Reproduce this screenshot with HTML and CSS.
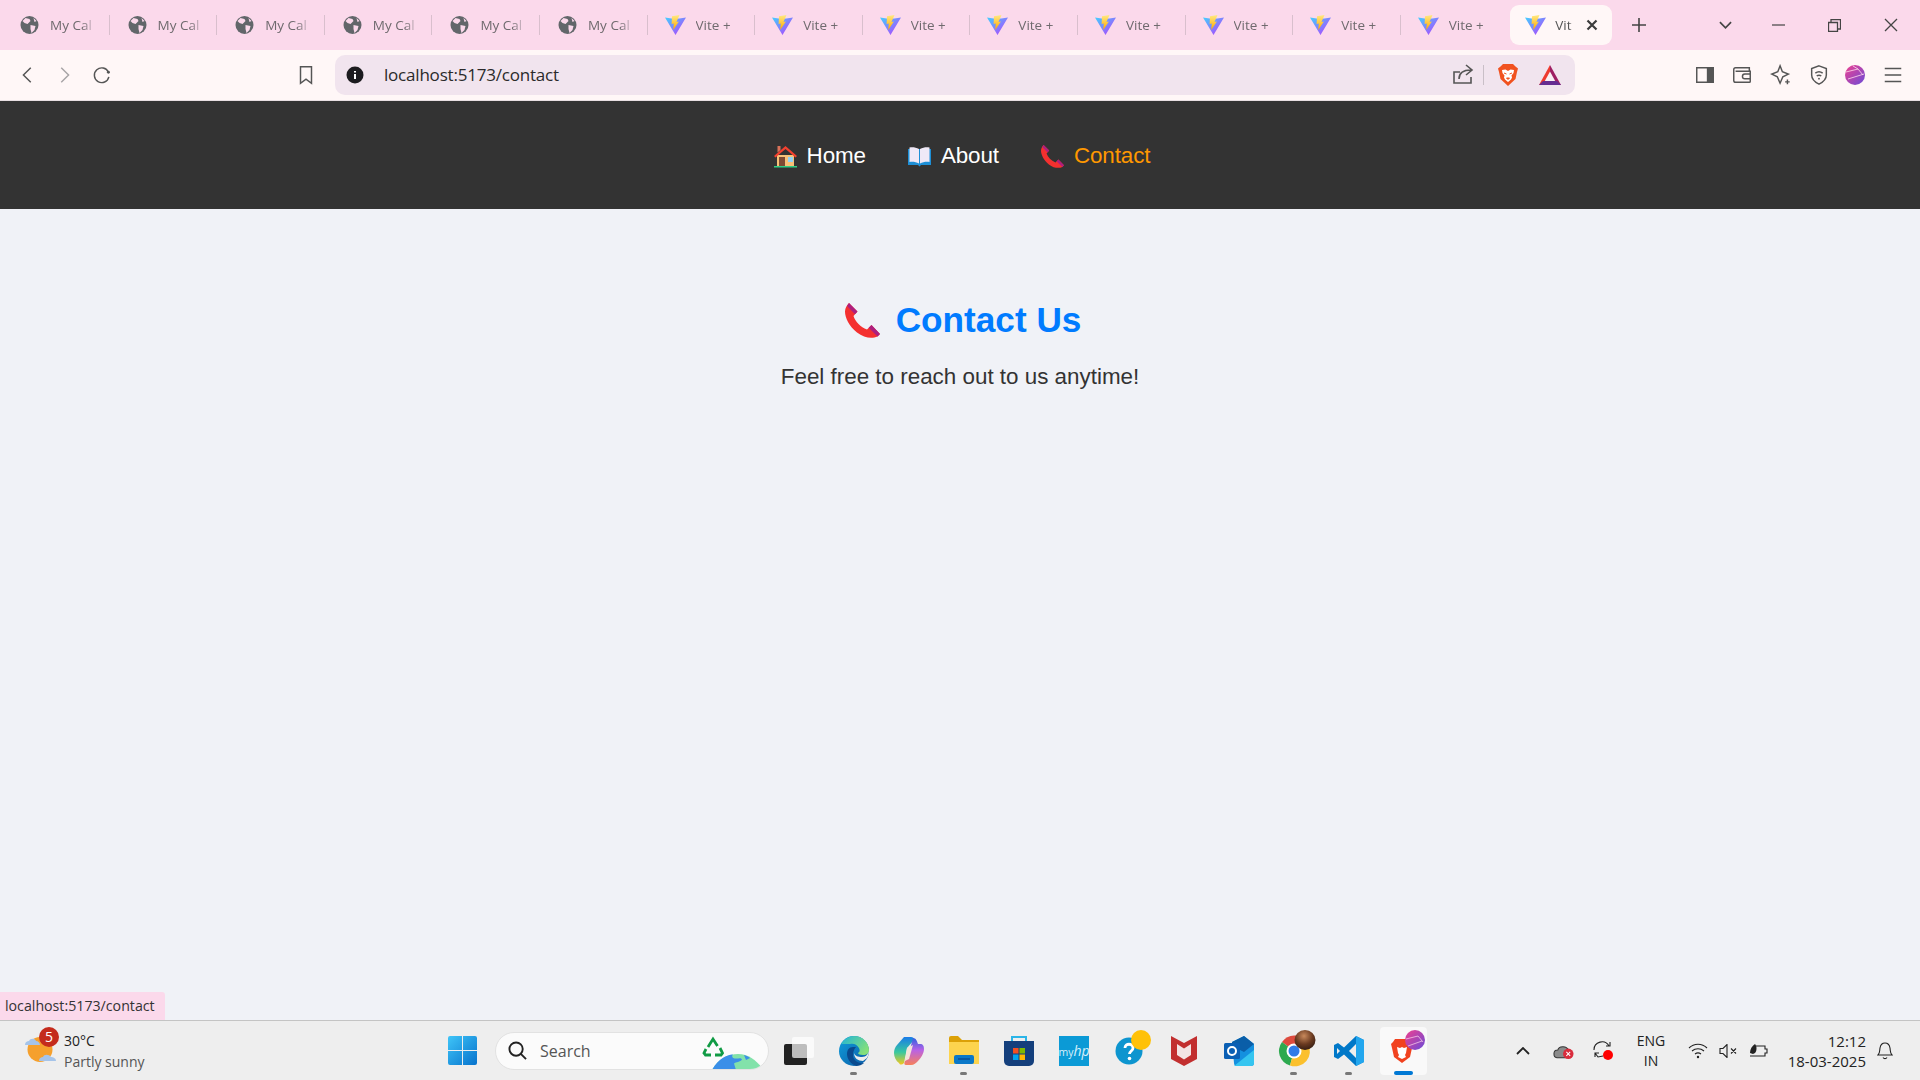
FILE: index.html
```html
<!DOCTYPE html>
<html lang="en">
<head>
<meta charset="utf-8" />
<title>Vite + React</title>
<link rel="stylesheet" href="styles.css">
</head>
<body>
<svg class="defs" width="0" height="0">
	<defs>
		<linearGradient id="viteBody" x1="0" y1="0" x2="1" y2="1">
			<stop offset="0" stop-color="#41d1ff" />
			<stop offset="1" stop-color="#bd34fe" />
		</linearGradient>
		<linearGradient id="viteBolt" x1="0" y1="0" x2="0" y2="1">
			<stop offset="0" stop-color="#ffea83" />
			<stop offset="1" stop-color="#ffa800" />
		</linearGradient>
		<linearGradient id="avatarFill" x1="0" y1="0" x2="1" y2="1">
			<stop offset="0" stop-color="#f0408f" />
			<stop offset="1" stop-color="#6a4bd8" />
		</linearGradient>
		<linearGradient id="edgeBase" x1="0" y1="0" x2="1" y2="1">
			<stop offset="0" stop-color="#0f9fdc" />
			<stop offset="1" stop-color="#0c5aa5" />
		</linearGradient>
		<linearGradient id="edgeTop" x1="0" y1="0" x2="1" y2=".6">
			<stop offset="0" stop-color="#20b4d8" />
			<stop offset="1" stop-color="#84e07a" />
		</linearGradient>
		<linearGradient id="copilotLeft" x1="0" y1="0" x2="0" y2="1">
			<stop offset="0" stop-color="#1a7be8" />
			<stop offset=".55" stop-color="#38c8a0" />
			<stop offset="1" stop-color="#f4c81c" />
		</linearGradient>
		<linearGradient id="copilotRight" x1="0" y1="0" x2="0" y2="1">
			<stop offset="0" stop-color="#2f62e0" />
			<stop offset=".45" stop-color="#b862e6" />
			<stop offset="1" stop-color="#f7805a" />
		</linearGradient>
		<linearGradient id="startFill" x1="0" y1="0" x2="1" y2="1">
			<stop offset="0" stop-color="#3fc5f8" />
			<stop offset="1" stop-color="#0672cc" />
		</linearGradient>
		<radialGradient id="badgeBrown" cx=".45" cy=".3" r=".75">
			<stop offset="0" stop-color="#c98a5c" />
			<stop offset=".55" stop-color="#6a3a20" />
			<stop offset="1" stop-color="#2e1a12" />
		</radialGradient>
		<symbol id="globe" viewBox="0 0 20 20">
			<circle cx="10" cy="10" r="9" fill="#62666a" />
			<path d="M6 3l4 1 1 2-3 3-3-1-2-2zM11 10l5 1-1 4-3 3-1-4zM14 3l3 3-2 1z" fill="#fbd9eb" />
		</symbol>
		<symbol id="vite" viewBox="0 0 21 20">
			<path d="M0 2.5l6.5 1 4 .3 4-.3 6.500-1L10.500 20z" fill="url(#viteBody)" />
			<path d="M14.500 0L7 1.300 6.600 9l2.200-.4-.6 6.400 5.700-8.500-2.400.4z" fill="url(#viteBolt)" />
		</symbol>
		<symbol id="phone" viewBox="0 0 35 35">
			<path d="M4 0l8.500 8.500-4 4.500c2 6 7 11 13.500 13.500l4.500-4.500L35 31l-2.500 2.500C27 36 19 35 12 29.500 4 23 0 15 0 8.500 0 5 2 2 4 0z" fill="#f4302f" />
			<path d="M4 0l8.500 8.500-2.500 2.800L2 3zM26.500 22L35 31l-2.500 2.500-8.800-8.700z" fill="#ad1f7f" />
		</symbol>
	</defs>
</svg>

<div class="tabstrip">
	<div class="tab"><svg class="favicon"><use href="#globe" /></svg><span class="tab-title">My Cal</span></div>
	<div class="tab"><svg class="favicon"><use href="#globe" /></svg><span class="tab-title">My Cal</span></div>
	<div class="tab"><svg class="favicon"><use href="#globe" /></svg><span class="tab-title">My Cal</span></div>
	<div class="tab"><svg class="favicon"><use href="#globe" /></svg><span class="tab-title">My Cal</span></div>
	<div class="tab"><svg class="favicon"><use href="#globe" /></svg><span class="tab-title">My Cal</span></div>
	<div class="tab"><svg class="favicon"><use href="#globe" /></svg><span class="tab-title">My Cal</span></div>
	<div class="tab"><svg class="favicon"><use href="#vite" /></svg><span class="tab-title">Vite +</span></div>
	<div class="tab"><svg class="favicon"><use href="#vite" /></svg><span class="tab-title">Vite +</span></div>
	<div class="tab"><svg class="favicon"><use href="#vite" /></svg><span class="tab-title">Vite +</span></div>
	<div class="tab"><svg class="favicon"><use href="#vite" /></svg><span class="tab-title">Vite +</span></div>
	<div class="tab"><svg class="favicon"><use href="#vite" /></svg><span class="tab-title">Vite +</span></div>
	<div class="tab"><svg class="favicon"><use href="#vite" /></svg><span class="tab-title">Vite +</span></div>
	<div class="tab"><svg class="favicon"><use href="#vite" /></svg><span class="tab-title">Vite +</span></div>
	<div class="tab tab-last"><svg class="favicon"><use href="#vite" /></svg><span class="tab-title">Vite +</span></div>
	<div class="tab-active">
		<svg class="favicon"><use href="#vite" /></svg>
		<span class="tab-title short">Vit</span>
		<svg class="tab-close" viewBox="0 0 12 12"><path d="M1.500 1.500l9 9M10.500 1.500l-9 9" /></svg>
	</div>
	<svg class="strip-icon new-tab" viewBox="0 0 14 14"><path d="M7 0v14M0 7h14" /></svg>
	<svg class="strip-icon tab-list" viewBox="0 0 14 8"><path d="M1 1l6 6 6-6" /></svg>
	<svg class="strip-icon win-min" viewBox="0 0 14 2"><path d="M0 1h14" /></svg>
	<svg class="strip-icon win-max" viewBox="0 0 13 13"><path d="M.5 3.500h9v9h-9zM3 3.500V.500h9.500V10H9.500" /></svg>
	<svg class="strip-icon win-close" viewBox="0 0 14 14"><path d="M1 1l12 12M13 1L1 13" /></svg>
</div>

<div class="toolbar">
	<svg class="tool back" viewBox="0 0 24 24"><path d="M15 4l-8 8 8 8" /></svg>
	<svg class="tool forward" viewBox="0 0 24 24"><path d="M9 4l8 8-8 8" /></svg>
	<svg class="tool reload" viewBox="0 0 24 24"><path d="M19 9a8 8 0 1 0 .500 5" /><circle class="solid" cx="19" cy="9" r="1.600" /></svg>
	<svg class="tool bookmark" viewBox="0 0 24 24"><path d="M6 3h12v18l-6-4.500L6 21z" /></svg>
	<div class="urlbar">
		<svg class="info" viewBox="0 0 18 18"><circle cx="9" cy="9" r="8.500" fill="#1c1b1f" /><path d="M9 8v5M9 5v1.500" stroke="#fff" stroke-width="2" /></svg>
		<span class="url">localhost:5173/contact</span>
		<svg class="tool share" viewBox="0 0 24 24"><path d="M20 14v6H3V9h6M8 16c0-6 4-9 12-9M15 2l6 5-6 5" /></svg>
		<span class="url-divider"></span>
		<svg class="brave" viewBox="0 0 20 22">
			<path d="M5 0h10l2.500 2.500L20 4.500 19 8l-1.500 7L10 22l-7.500-7L1 8 0 4.500l2.500-2z" fill="#f1521f" />
			<path d="M4 6l3.500-.5L10 7l2.500-1.500L16 6l-.5 3-2 2.500.5 2-1 2-3 2.500-3-2.500-1-2 .5-2-2-2.500z" fill="#fff" />
			<path d="M6 9l2.500 1M14 9l-2.500 1M8.500 14h3l-1.500 1.500z" stroke="#f1521f" fill="#f1521f" />
		</svg>
		<svg class="bat" viewBox="0 0 22 20">
			<path d="M11 0L0 20h6l5-10z" fill="#ee3a2f" />
			<path d="M11 0l11 20h-6l-5-10z" fill="#9e1f63" />
			<path d="M0 20l4-4h14l4 4z" fill="#662d91" />
			<path d="M11 6.500l5.200 9.500H5.800z" fill="#f8f0f4" />
		</svg>
	</div>
	<svg class="tool sidepanel" viewBox="0 0 24 24"><path d="M3 4h18v16H3z" /><path class="solid" d="M14 4h7v16h-7z" /></svg>
	<svg class="tool wallet" viewBox="0 0 24 24"><path d="M20 7V4H5a2 2 0 0 0-2 2v12a2 2 0 0 0 2 2h15a1 1 0 0 0 1-1V8H5M21 11h-6a2 2 0 0 0 0 5h6" /></svg>
	<svg class="tool leo" viewBox="0 0 24 24"><path d="M11 2l2.500 6.500L20 11l-6 3-3 7-3-7-6-3 6.500-2.500zM19 17v5M16.500 19.500h5" /></svg>
	<svg class="tool vpn" viewBox="0 0 24 24"><path d="M12 2l8 3v7c0 5-4 8-8 10-4-2-8-5-8-10V5z" /><path d="M8 10c2.500-2 5.500-2 8 0M9.500 13c1.500-1 3.500-1 5 0" /><circle class="solid" cx="12" cy="16" r="1" /></svg>
	<svg class="avatar" viewBox="0 0 20 20">
		<circle cx="10" cy="10" r="10" fill="url(#avatarFill)" />
		<path d="M1 7l12-3 5 6M3 14l16-5M8 1l5 3" stroke="#ffd9ec" stroke-width=".8" fill="none" />
	</svg>
	<svg class="tool menu" viewBox="0 0 24 24"><path d="M3 5h18M3 12h18M3 19h18" /></svg>
</div>

<nav class="site-nav">
	<a class="nav-link" href="#">
		<svg class="nav-icon" viewBox="0 0 23 23">
			<path d="M3 10h17v11H3z" fill="#f7c178" />
			<path d="M0 11L11.500 1 23 11l-1.500 1.500-10-8.500-10 8.500z" fill="#f4402f" />
			<path d="M3.500 1h3v4l-3 2.500z" fill="#d9735a" />
			<path d="M5 12h6v9H5z" fill="#7d4a33" />
			<path d="M14 12h5v5h-5z" fill="#8fd2f5" />
			<path d="M0 21h23v1.500H0z" fill="#2fcf85" />
		</svg>
		Home
	</a>
	<a class="nav-link" href="#">
		<svg class="nav-icon" viewBox="0 0 23 23">
			<path d="M0 4h23v16H13l-1.500 1.500L10 20H0z" fill="#1d8fd6" />
			<path d="M1.500 2.500C5 2 8 2.500 11 4v14.500c-3-1.500-6-2-9.500-1.500zM21.500 2.500C18 2 15 2.500 12 4v14.500c3-1.500 6-2 9.500-1.500z" fill="#efe9f7" />
		</svg>
		About
	</a>
	<a class="nav-link current" href="#">
		<svg class="nav-icon"><use href="#phone" /></svg>
		Contact
	</a>
</nav>

<main class="content">
	<h1 class="title"><svg class="title-icon"><use href="#phone" /></svg>Contact Us</h1>
	<p class="lead">Feel free to reach out to us anytime!</p>
	<div class="status-bubble">localhost:5173/contact</div>
</main>

<footer class="taskbar">
	<div class="weather">
		<svg class="weather-icon" viewBox="0 0 32 32">
			<circle cx="15" cy="14.500" r="12.500" fill="#f5a02d" />
			<path d="M0 10c0-3 2-4 4-4 1-3 6-3 7 0 2 0 4 2 4 4zM14 26c0-3 2-4 4-4 1-3 6-3 8 0 2 0 5 1 5 4z" fill="#a5c4ea" />
		</svg>
		<span class="weather-badge">5</span>
		<div class="weather-text">
			<span class="temp">30°C</span>
			<span class="sky">Partly sunny</span>
		</div>
	</div>

	<svg class="start" viewBox="0 0 29 29">
		<path d="M0 2a2 2 0 0 1 2-2h12v14H0zM15 0h12a2 2 0 0 1 2 2v12H15zM0 15h14v14H2a2 2 0 0 1-2-2zM15 15h14v12a2 2 0 0 1-2 2H15z" fill="url(#startFill)" />
	</svg>

	<div class="search">
		<svg class="search-icon" viewBox="0 0 20 20"><circle cx="8.500" cy="8.500" r="7" /><path d="M13.500 13.500L19 19" /></svg>
		<span class="search-text">Search</span>
		<svg class="search-art" viewBox="0 0 60 38">
			<path d="M6 15l5-8 4.500 7M18 16l2.500 5-1.500 2h-6M9 23H3.500L2 21l2-4" fill="none" stroke="#119b45" stroke-width="2.800" />
			<path d="M10 38c6-11 16-16 26-16s18 6 24 14v2z" fill="#82e2aa" />
			<path d="M10 38c6-11 16-16 21-15.500-2 2 0 4 3 4s5-1 6 1c-2 3-6 2-8 4l2 6.500zM42 23c3 1 5 2 6 3l-4 2z" fill="#3b8fe8" />
		</svg>
	</div>

	<div class="task-icons">
		<div class="task-item">
			<svg class="task-icon" viewBox="0 0 30 30">
				<rect x="0" y="8" width="23" height="21" rx="2" fill="#222" />
				<rect x="8" y="1" width="22" height="21" rx="2" fill="#fff" opacity=".7" />
			</svg>
		</div>
		<div class="task-item open">
			<svg class="task-icon" viewBox="0 0 30 30">
				<circle cx="15" cy="15" r="15" fill="url(#edgeBase)" />
				<path d="M2 8C5 3 10 0 15 0c9 0 15 7 15 14 0 3-2 5-6 5-3 0-5-1-5-2 2-1 2-3 1-5-2-4-6-5-9-4C8 8 5 8 2 8z" fill="url(#edgeTop)" />
				<path d="M14 11c-4 0-6 3-6 7 0 5 4 10 9 12 3 0 6-1 8-3-6 1-11-3-11-8 0-3 1-6 3-8z" fill="#0a4a8e" />
				<path d="M30 15c-1 3-3 6-7 6-4 0-7-1-8-4 0 5 4 8 9 8l4-3c1-2 2-4 2-7z" fill="#eee" />
			</svg>
		</div>
		<div class="task-item">
			<svg class="task-icon" viewBox="0 0 30 30">
				<path d="M10 1h7c2 0 3 1 3 3l-7 8-3 15c-2 2-4 2-5 0C2 25 0 21 0 17c0-3 1-6 3-8z" fill="url(#copilotLeft)" />
				<path d="M19 2c3 0 4 3 5 6h2c3 0 4 2 4 5 0 4-3 9-6 12-2 2-4 4-7 4h-5c-2 0-2-2-1-4l5-12z" fill="url(#copilotRight)" />
				<path d="M13 12l6-3-4 14-4 2z" fill="#f5e4d8" />
			</svg>
		</div>
		<div class="task-item open">
			<svg class="task-icon" viewBox="0 0 30 30">
				<path d="M0 2a2 2 0 0 1 2-2h7l4 4h17v10H0z" fill="#dca107" />
				<path d="M0 6h30v22H0z" fill="#fdd44e" />
				<rect x="5" y="19" width="20" height="9" rx="2" fill="#0b78c8" />
				<path d="M9 23h12" stroke="#0a4f96" stroke-width="1.500" />
			</svg>
		</div>
		<div class="task-item">
			<svg class="task-icon" viewBox="0 0 30 30">
				<path d="M8 6V1h14v5" fill="none" stroke="#2bb5e8" stroke-width="2" />
				<path d="M0 5h30v20a5 5 0 0 1-5 5H5a5 5 0 0 1-5-5z" fill="#143f7c" />
				<path d="M9 12h5.500v5.500H9z" fill="#f25022" />
				<path d="M15.500 12H21v5.500h-5.500z" fill="#7fba00" />
				<path d="M9 18.500h5.500V24H9z" fill="#00a4ef" />
				<path d="M15.500 18.500H21V24h-5.500z" fill="#ffb900" />
			</svg>
		</div>
		<div class="task-item">
			<div class="myhp">my<b>hp</b></div>
		</div>
		<div class="task-item">
			<svg class="task-icon overflow" viewBox="0 0 30 30">
				<circle cx="15" cy="15" r="13.500" fill="#0d95cf" />
				<path d="M11 12c0-5 8-5 8 0 0 3-3.500 3-3.500 6" fill="none" stroke="#fff" stroke-width="2.800" />
				<circle cx="15.500" cy="22.500" r="1.800" fill="#fff" />
				<circle cx="27" cy="4" r="10" fill="#ffc107" />
			</svg>
		</div>
		<div class="task-item">
			<svg class="task-icon" viewBox="0 0 30 30">
				<path d="M2 0l13 7 13-7v23l-13 7-13-7z" fill="#c22f2f" />
				<path d="M8 8l7 4.500L22 8v11l-7 4.500L8 19z" fill="#f3e4e4" />
			</svg>
		</div>
		<div class="task-item">
			<svg class="task-icon" viewBox="0 0 30 30">
				<path d="M8 6l12-6 10 8v19a3 3 0 0 1-3 3H13a3 3 0 0 1-3-3z" fill="#1490df" />
				<path d="M20 0l10 8-10 8-12-6V6z" fill="#0a5ea8" />
				<path d="M10 30l20-16v13a3 3 0 0 1-3 3z" fill="#35c5f0" />
				<rect x="0" y="7" width="16" height="16" rx="1.500" fill="#0a5fb4" />
				<circle cx="8" cy="15" r="4" fill="none" stroke="#fff" stroke-width="2" />
			</svg>
		</div>
		<div class="task-item open">
			<svg class="task-icon overflow" viewBox="0 0 30 30">
				<path d="M15 15L3 6A15 15 0 0 1 29 8z" fill="#dd4b3e" />
				<path d="M15 15L3 6a15 15 0 0 0 8 23.500z" fill="#2da94f" />
				<path d="M15 15l14-7a15 15 0 0 1-18 21.500z" fill="#fbc02d" />
				<circle cx="15" cy="15" r="7.500" fill="#fff" />
				<circle cx="15" cy="15" r="5.500" fill="#2f7be8" />
				<ellipse cx="26" cy="4" rx="10.500" ry="10" fill="url(#badgeBrown)" />
			</svg>
		</div>
		<div class="task-item open">
			<svg class="task-icon" viewBox="0 0 30 30">
				<path d="M22 0l8 4v22l-8 4-12-11.500L4 23l-4-2v-12l4-2 6 4.500z" fill="#0078c8" />
				<path d="M22 0l8 4v22l-8 4z" fill="#22a6ee" />
				<path d="M22 8l-7 7 7 7z" fill="#eeeeee" />
				<path d="M3 12l3 3-3 3z" fill="#eeeeee" />
			</svg>
		</div>
		<div class="task-item active">
			<svg class="task-icon overflow" viewBox="0 0 30 30">
				<path d="M6 3h14l2 3 2 2-1 4-2 9-8 6-8-6-2-9-1-4 2-2z" fill="#f1421f" />
				<path d="M8 11l3 1 2-1 2 1 3-1-1 6-1 2 1 2-4 2-4-2 1-2-1-2z" fill="#fff" />
				<circle cx="26" cy="4" r="10" fill="url(#avatarFill)" />
				<path d="M17 3l12-3 5 6M19 10l14-5" stroke="#ffd9ec" stroke-width=".7" fill="none" />
			</svg>
		</div>
	</div>

	<div class="tray">
		<svg class="tray-icon chevron" viewBox="0 0 14 8"><path d="M1 7l6-6 6 6" /></svg>
		<svg class="tray-icon onedrive" viewBox="0 0 22 18">
			<path d="M1 12c0-3 2-4 4-4 1-4 9-5 11 0v5a3 3 0 0 1-3 3H4c-2 0-3-2-3-4z" fill="#8b8b8b" stroke="#333" />
			<circle cx="16" cy="12" r="5.500" fill="#d92c3c" />
			<path d="M14 10l4 4M18 10l-4 4" stroke="#fff" />
		</svg>
		<svg class="tray-icon sync" viewBox="0 0 22 20">
			<path d="M1 9a8 8 0 0 1 15-4M17 1v4h-4M2 12l3 4 5-1M2 16v-4h4" />
			<circle class="dot" cx="15" cy="14" r="5" />
		</svg>
		<div class="lang"><span>ENG</span><span>IN</span></div>
		<svg class="tray-icon wifi" viewBox="0 0 20 16">
			<path d="M1 5c5-5 13-5 18 0M4 8c3.500-3 8.500-3 12 0M7 11c2-1.500 4-1.500 6 0" />
			<circle class="solid" cx="10" cy="14" r="1.200" />
		</svg>
		<svg class="tray-icon speaker" viewBox="0 0 19 14"><path d="M1 4.500h3l4-4v13l-4-4H1zM12 4.500l5 5M17 4.500l-5 5" /></svg>
		<svg class="tray-icon battery" viewBox="0 0 20 14">
			<path d="M7 2h9v3h2v4h-2v3H1" />
			<path class="solid" d="M1 9c0-4 2-7 5-9 2 2 2 7 0 9l-2 1z" />
		</svg>
		<div class="clock"><span>12:12</span><span>18-03-2025</span></div>
		<svg class="tray-icon bell" viewBox="0 0 16 18"><path d="M1 13c2-2 1.500-4 2-7 .5-3 2.500-5 5-5s4.500 2 5 5c.5 3 0 5 2 7zM6 15.500c1 1.500 3 1.500 4 0" /></svg>
	</div>
</footer>
</body>
</html>
```

FILE: styles.css
```css
html, body {
	margin: 0;
	height: 100%;
}
body {
	display: flex;
	flex-direction: column;
	height: 1080px;
	overflow: hidden;
	background: #f0f2f7;
	font-family: "Liberation Sans", Arial, sans-serif;
}
.defs {
	position: absolute;
}

/* browser tabs */
.tabstrip {
	display: flex;
	align-items: center;
	height: 50px;
	padding-left: 2px;
	background: #fbd9eb;
	font-family: "Open Sans", sans-serif;
	font-size: 13.5px;
}
.tab {
	display: flex;
	align-items: center;
	box-sizing: border-box;
	width: 107.6px;
	height: 20px;
	padding-left: 17px;
	gap: 10px;
	border-right: 1px solid #d9bfcd;
	color: #6f6a6e;
	flex: none;
}
.tab-last {
	border-right: 0;
}
.favicon {
	width: 21px;
	height: 20px;
	flex: none;
}
.tab-title {
	width: 46px;
	white-space: nowrap;
	-webkit-mask-image: linear-gradient(to right, #000 70%, transparent);
	mask-image: linear-gradient(to right, #000 70%, transparent);
}
.tab-title.short {
	width: 20px;
	margin-left: 9px;
	color: #555;
}
.tab-active {
	display: flex;
	align-items: center;
	box-sizing: border-box;
	width: 102px;
	height: 40px;
	margin-left: 2px;
	padding-left: 15px;
	background: #fff7f7;
	border-radius: 9px;
	flex: none;
}
.tab-close {
	width: 12px;
	height: 12px;
	margin-left: 11px;
	fill: none;
	stroke: #3c3c3c;
	stroke-width: 2.2;
}
.strip-icon {
	fill: none;
	stroke: #444;
	stroke-width: 1.300;
	flex: none;
}
.new-tab {
	width: 14px;
	height: 14px;
	margin-left: 20px;
	stroke-width: 1.600;
}
.tab-list {
	width: 13px;
	height: 8px;
	margin-left: 73px;
	stroke-width: 1.800;
}
.win-min {
	width: 13px;
	height: 2px;
	margin-left: 40px;
}
.win-max {
	width: 13px;
	height: 13px;
	margin-left: 43px;
}
.win-close {
	width: 14px;
	height: 14px;
	margin-left: 43px;
}

/* address bar row */
.toolbar {
	display: flex;
	align-items: center;
	box-sizing: border-box;
	height: 51px;
	padding: 0 15px 1px 17px;
	background: #fff7f7;
	border-bottom: 1px solid #e8dfe2;
}
.tool {
	width: 22px;
	height: 22px;
	fill: none;
	stroke: #555;
	stroke-width: 1.600;
	flex: none;
}
.tool .solid {
	fill: #555;
	stroke: none;
}
.forward {
	margin-left: 14px;
	stroke: #a8a4a6;
}
.reload {
	margin-left: 16px;
}
.bookmark {
	margin-left: 182px;
}
.urlbar {
	display: flex;
	align-items: center;
	box-sizing: border-box;
	width: 1240px;
	height: 40px;
	margin-left: 18px;
	padding: 0 14px 0 11px;
	background: #f1e4ee;
	border-radius: 10px;
	flex: none;
}
.info {
	width: 18px;
	height: 18px;
	flex: none;
}
.url {
	margin-left: 20px;
	font-family: "Open Sans", sans-serif;
	font-size: 17px;
	color: #2a2a2a;
	letter-spacing: -.2px;
	flex: 1;
}
.share {
	width: 24px;
	height: 24px;
}
.url-divider {
	width: 1px;
	height: 20px;
	margin: 0 14px 0 8px;
	background: #c9bfc7;
}
.brave {
	width: 20px;
	height: 22px;
	flex: none;
}
.bat {
	width: 22px;
	height: 20px;
	margin-left: 21px;
	flex: none;
}
.sidepanel {
	margin-left: 119px;
}
.wallet {
	margin-left: 15px;
}
.leo {
	margin-left: 17px;
}
.vpn {
	margin-left: 16px;
}
.avatar {
	width: 20px;
	height: 20px;
	margin-left: 15px;
	flex: none;
}
.menu {
	margin-left: 17px;
}

/* site nav */
.site-nav {
	display: flex;
	justify-content: center;
	align-items: center;
	gap: 42px;
	box-sizing: border-box;
	height: 108px;
	padding: 2px 0 0 4px;
	background: #333;
	flex: none;
}
.nav-link {
	display: flex;
	align-items: center;
	gap: 10px;
	font-size: 22.4px;
	letter-spacing: -.1px;
	color: #fff;
	text-decoration: none;
}
.nav-link.current {
	color: #ff9800;
}
.nav-icon {
	width: 23px;
	height: 23px;
	flex: none;
}

/* page content */
.content {
	position: relative;
	flex: 1;
	padding-top: 91px;
	text-align: center;
}
.title {
	display: flex;
	justify-content: center;
	align-items: center;
	gap: 16px;
	margin: 0;
	padding-left: 6px;
	font-size: 35.2px;
	line-height: 40px;
	color: #007bff;
}
.title-icon {
	width: 35px;
	height: 35px;
	flex: none;
}
.lead {
	margin: 23px 0 0;
	font-size: 22.4px;
	line-height: 28px;
	color: #333;
}
.status-bubble {
	position: absolute;
	left: 0;
	bottom: 0;
	box-sizing: border-box;
	width: 165px;
	height: 28px;
	padding-left: 5px;
	background: #fbd9eb;
	border-radius: 0 3px 0 0;
	font-family: "Open Sans", sans-serif;
	font-size: 14.2px;
	line-height: 28px;
	color: #333;
	text-align: left;
	white-space: nowrap;
}

/* windows taskbar */
.taskbar {
	display: flex;
	align-items: center;
	box-sizing: border-box;
	height: 60px;
	background: #eee;
	border-top: 1px solid #c4c4c4;
	font-family: "Open Sans", sans-serif;
	flex: none;
}
.weather {
	position: relative;
	display: flex;
	align-items: center;
	width: 448px;
	box-sizing: border-box;
	padding-left: 25px;
	flex: none;
}
.weather-icon {
	width: 32px;
	height: 32px;
	flex: none;
}
.weather-badge {
	position: absolute;
	left: 39px;
	top: -3px;
	width: 20px;
	height: 20px;
	border-radius: 50%;
	background: #c42b1c;
	color: #fff;
	font-size: 14px;
	line-height: 20px;
	text-align: center;
}
.weather-text {
	display: flex;
	flex-direction: column;
	margin-left: 7px;
	font-size: 14px;
	line-height: 21px;
	color: #222;
}
.sky {
	color: #555;
}
.start {
	width: 29px;
	height: 29px;
	flex: none;
}
.search {
	display: flex;
	align-items: center;
	box-sizing: border-box;
	width: 274px;
	height: 38px;
	margin-left: 18px;
	padding-left: 12px;
	background: #fbfbfb;
	border: 1px solid #e2e2e2;
	border-radius: 19px;
	overflow: hidden;
	flex: none;
}
.search-icon {
	width: 19px;
	height: 19px;
	fill: none;
	stroke: #222;
	stroke-width: 2;
	flex: none;
}
.search-text {
	width: 162px;
	margin-left: 13px;
	font-size: 16px;
	color: #555;
	flex: none;
}
.search-art {
	width: 60px;
	height: 38px;
	flex: none;
}
.task-icons {
	display: flex;
	margin-left: 2px;
	flex: none;
}
.task-item {
	position: relative;
	display: flex;
	align-items: center;
	justify-content: center;
	width: 55px;
	height: 48px;
	flex: none;
}
.task-item.open::after,
.task-item.active::after {
	content: "";
	position: absolute;
	bottom: 0;
	left: 50%;
	width: 7px;
	height: 3px;
	margin-left: -3.500px;
	border-radius: 2px;
	background: #777;
}
.task-item.active {
	width: 47px;
	margin-left: 4px;
	background: #f9f9f9;
	border-radius: 4px;
}
.task-item.active::after {
	width: 19px;
	height: 4px;
	margin-left: -9.500px;
	background: #0078d4;
}
.task-icon {
	width: 30px;
	height: 30px;
	flex: none;
}
.task-icon.overflow {
	overflow: visible;
}
.myhp {
	width: 30px;
	height: 30px;
	background: #0b9ad6;
	color: #d8f0fb;
	font-size: 10.5px;
	line-height: 30px;
	text-align: center;
}
.myhp b {
	font-size: 14px;
	font-style: italic;
	font-weight: 400;
}
.tray {
	display: flex;
	align-items: center;
	margin-left: 89px;
	color: #222;
	flex: none;
}
.tray-icon {
	fill: none;
	stroke: #222;
	stroke-width: 1.100;
	flex: none;
}
.tray-icon .solid {
	fill: #222;
	stroke: none;
}
.chevron {
	width: 14px;
	height: 8px;
	stroke-width: 1.800;
}
.onedrive {
	width: 21px;
	height: 18px;
	margin-left: 23px;
	stroke: none;
}
.sync {
	width: 22px;
	height: 20px;
	margin-left: 19px;
}
.sync .dot {
	fill: #f00;
	stroke: none;
}
.lang {
	display: flex;
	flex-direction: column;
	align-items: center;
	width: 40px;
	margin-left: 16px;
	font-size: 14px;
	line-height: 20px;
}
.wifi {
	width: 20px;
	height: 16px;
	margin-left: 17px;
}
.speaker {
	width: 19px;
	height: 14px;
	margin-left: 11px;
}
.battery {
	width: 20px;
	height: 14px;
	margin-left: 11px;
}
.clock {
	display: flex;
	flex-direction: column;
	align-items: flex-end;
	width: 97px;
	font-size: 15px;
	line-height: 20px;
}
.bell {
	width: 16px;
	height: 18px;
	margin-left: 11px;
}
```
